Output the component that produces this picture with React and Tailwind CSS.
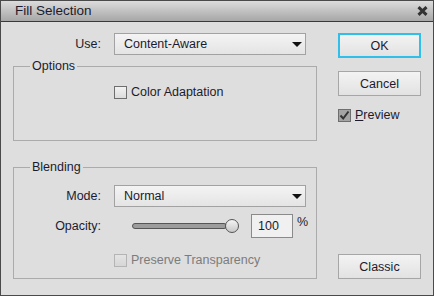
import React from 'react';

const Checkbox = ({ checked, disabled }) => (
  <span
    className={`w-[13px] h-[13px] shrink-0 border flex items-center justify-center ${
      checked
        ? 'border-[#6e6e6e] bg-[#a4a4a4]'
        : disabled
        ? 'border-[#b4b4b4] bg-gradient-to-b from-[#e4e4e4] to-[#d6d6d6]'
        : 'border-[#6e6e6e] bg-gradient-to-b from-[#f2f2f2] to-[#dcdcdc]'
    }`}
  >
    {checked && (
      <svg width="11" height="11" viewBox="0 0 11 11">
        <path d="M1.5 5.5 L4.2 8.5 L9.5 1.5" fill="none" stroke="#333" strokeWidth="2" />
      </svg>
    )}
  </span>
);

const Select = ({ value }) => (
  <div className="ml-[13px] w-[192px] h-[22px] border border-[#a2a2a2] bg-gradient-to-b from-[#f4f4f4] to-[#e4e4e4] flex items-center justify-between pl-[9px] pr-[3px]">
    <span>{value}</span>
    <svg width="10" height="5" viewBox="0 0 10 5">
      <path d="M0 0 H10 L5 5 Z" fill="#111" />
    </svg>
  </div>
);

const Button = ({ children, focused, className = '' }) => (
  <button
    className={`w-[83px] h-[25px] flex items-center justify-center bg-gradient-to-b from-[#f3f3f3] to-[#e2e2e2] ${
      focused ? 'border-2 border-[#30bfe9]' : 'border border-[#a6a6a6]'
    } ${className}`}
  >
    {children}
  </button>
);

export default function App() {
  return (
    <div className="w-[434px] h-[296px] bg-[#dedede] border border-[#4a4a4a] flex flex-col font-['Liberation_Sans',Arial,sans-serif] text-[12.5px] text-[#1c1b2e] leading-[14px]">
      <div className="h-[21px] shrink-0 border-b border-[#3a3a3a] bg-gradient-to-b from-[#dcdcdc] to-[#a7a7a7] flex items-center justify-between pl-[14px] pr-[5px]">
        <span className="text-[13.5px]">Fill Selection</span>
        <svg width="11" height="10" viewBox="0 0 11 10">
          <path d="M1.5 1.2 L9.5 8.8 M9.5 1.2 L1.5 8.8" stroke="#333" strokeWidth="3" />
        </svg>
      </div>

      <div className="flex flex-1 pl-[12px] pt-[11px] pb-[17px]">
        <div className="w-[304px] flex flex-col">
          <div className="flex items-center h-[22px]">
            <span className="w-[88px] text-right">Use:</span>
            <Select value="Content-Aware" />
          </div>

          <fieldset className="mt-[4px] h-[82px] border border-[#ababab] p-0 m-0">
            <legend className="ml-[16px] px-[2px]">Options</legend>
            <div className="flex items-center gap-[4px] pl-[100px] mt-[12px]">
              <Checkbox />
              <span>Color Adaptation</span>
            </div>
          </fieldset>

          <fieldset className="mt-[19px] h-[119px] border border-[#ababab] p-0 m-0">
            <legend className="ml-[16px] px-[2px]">Blending</legend>
            <div className="flex items-center h-[22px] mt-[11px]">
              <span className="w-[87px] text-right">Mode:</span>
              <Select value="Normal" />
            </div>
            <div className="flex items-center h-[24px] mt-[7px]">
              <span className="w-[87px] text-right">Opacity:</span>
              <div className="ml-[31px] w-[107px] h-[14px] flex items-center">
                <div className="flex-1 h-[6px] -mr-[2px] rounded-full border border-[#555] bg-[#9c9c9c]" />
                <div className="w-[14px] h-[14px] rounded-full border border-[#555] bg-gradient-to-b from-[#f4f4f4] to-[#c8c8c8]" />
              </div>
              <div className="ml-[12px] w-[42px] h-[24px] border border-[#8a8a8a] bg-[#f0f0f0] flex items-center pl-[6px]">
                100
              </div>
              <span className="ml-[4px] self-start mt-[1px]">%</span>
            </div>
            <div className="flex items-center gap-[4px] pl-[100px] mt-[15px] text-[#7c7c7c]">
              <Checkbox disabled />
              <span>Preserve Transparency</span>
            </div>
          </fieldset>
        </div>

        <div className="ml-[21px] w-[83px] flex flex-col">
          <Button focused>OK</Button>
          <Button className="mt-[13px]">Cancel</Button>
          <div className="mt-[12px] flex items-center gap-[4px]">
            <Checkbox checked />
            <span>
              <span className="underline">P</span>review
            </span>
          </div>
          <Button className="mt-auto">Classic</Button>
        </div>
      </div>
    </div>
  );
}
